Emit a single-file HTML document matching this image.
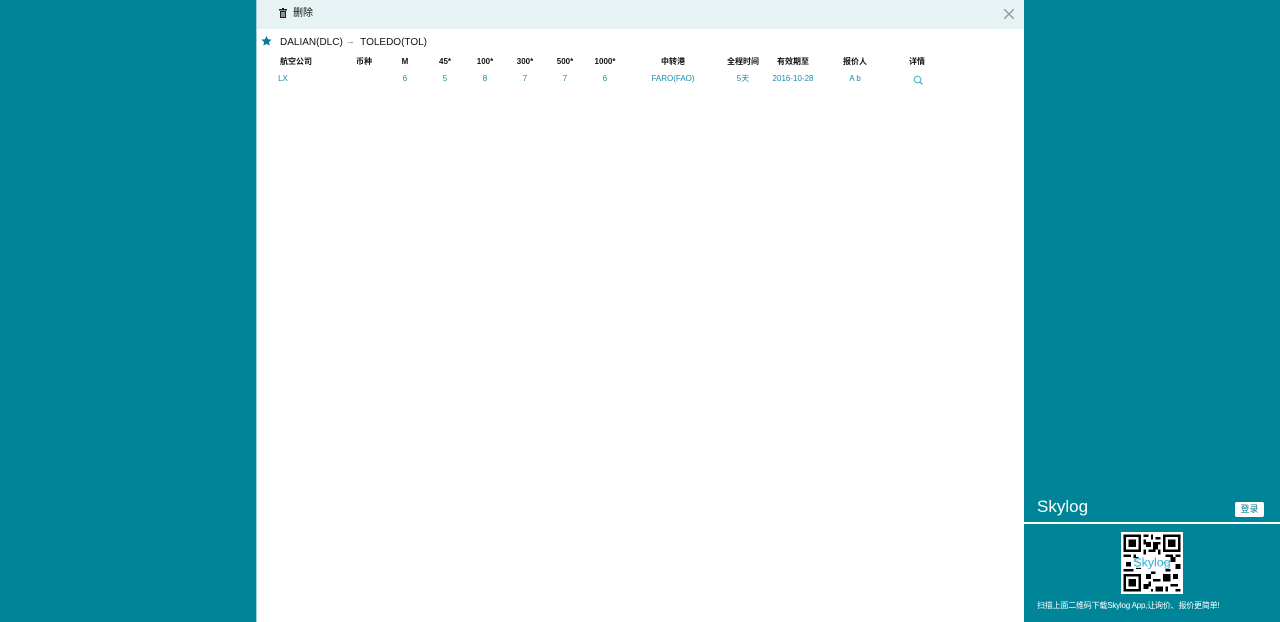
<!DOCTYPE html>
<html><head><meta charset="utf-8"><style>
*{margin:0;padding:0;box-sizing:border-box}
body{width:1280px;height:622px;background:#008598;position:relative;overflow:hidden;font-family:"Liberation Sans","Noto Sans CJK SC",sans-serif}
#panel{position:absolute;left:256px;top:0;width:768px;height:622px;background:#fff;border-left:1px solid #9fd0da}
#bar{position:absolute;left:0;top:0;width:767px;height:29px;background:#e6f2f4}
.t{position:absolute;white-space:nowrap;transform:translateX(-50%);line-height:10px;height:10px}
.h{top:57px;font-size:8px;font-weight:bold;color:#111}
.d{top:74px;font-size:8px;color:#1a8aa8}
</style></head><body>
<div id="panel">
<div id="bar">
<svg style="position:absolute;left:22px;top:8px" width="8" height="10" viewBox="0 0 8 10"><rect x="0" y="1" width="8" height="1.5" fill="#222"/><rect x="3" y="0" width="2" height="1" fill="#222"/><rect x="1" y="3" width="6" height="7" fill="#222"/><rect x="2.5" y="4" width="1" height="5" fill="#fff"/><rect x="4.5" y="4" width="1" height="5" fill="#fff"/></svg>
<div style="position:absolute;left:36px;top:8px;font-size:10px;line-height:12px;color:#111">删除</div>
<svg style="position:absolute;left:747px;top:9px" width="10" height="10" viewBox="0 0 10 10"><path d="M0 0L10 10M10 0L0 10" stroke="#999" stroke-width="1.4"/></svg>
</div>
<svg style="position:absolute;left:4px;top:36px" width="11" height="10" viewBox="0 0 24 23"><path d="M12 0l3.5 7.5 8.2.9-6.1 5.6 1.7 8.1L12 18l-7.3 4.1 1.7-8.1L.3 8.4l8.2-.9z" fill="#0a7a96"/></svg>
<div style="position:absolute;left:23px;top:36px;font-size:10px;line-height:12px;color:#111">DALIAN(DLC) <span style="color:#0a7a96;font-size:9px;position:relative;top:-1px">→</span> &nbsp;TOLEDO(TOL)</div>
<div class="t h" style="left:39px">航空公司</div>
<div class="t h" style="left:107px">币种</div>
<div class="t h" style="left:148px">M</div>
<div class="t h" style="left:188px">45*</div>
<div class="t h" style="left:228px">100*</div>
<div class="t h" style="left:268px">300*</div>
<div class="t h" style="left:308px">500*</div>
<div class="t h" style="left:348px">1000*</div>
<div class="t h" style="left:416px">中转港</div>
<div class="t h" style="left:486px">全程时间</div>
<div class="t h" style="left:536px">有效期至</div>
<div class="t h" style="left:598px">报价人</div>
<div class="t h" style="left:660px">详情</div>
<div class="t d" style="left:26px">LX</div>
<div class="t d" style="left:148px">6</div>
<div class="t d" style="left:188px">5</div>
<div class="t d" style="left:228px">8</div>
<div class="t d" style="left:268px">7</div>
<div class="t d" style="left:308px">7</div>
<div class="t d" style="left:348px">6</div>
<div class="t d" style="left:416px">FARO(FAO)</div>
<div class="t d" style="left:486px">5天</div>
<div class="t d" style="left:536px">2016-10-28</div>
<div class="t d" style="left:598px">A b</div>
<svg style="position:absolute;left:656px;top:75px" width="10" height="10" viewBox="0 0 10 10"><circle cx="4.5" cy="4.5" r="3.3" fill="none" stroke="#5bb8cc" stroke-width="1.2"/><path d="M7 7L9.5 9.5" stroke="#5bb8cc" stroke-width="1.3"/></svg>
</div>
<div style="position:absolute;left:1037px;top:497px;font-size:17px;line-height:20px;color:#fff">Skylog</div>
<div style="position:absolute;left:1235px;top:502px;width:29px;height:15px;background:#fff;border-radius:2px;font-size:9px;color:#0a7a96;text-align:center;line-height:15px">登录</div>
<div style="position:absolute;left:1024px;top:522px;width:256px;height:2px;background:#fff"></div>
<svg style="position:absolute;left:1121px;top:532px" width="62" height="62" viewBox="0 0 25 25" shape-rendering="crispEdges">
<rect width="25" height="25" fill="#fff"/>
<g fill="#000">
<rect x="1" y="1" width="7" height="7"/><rect x="17" y="1" width="7" height="7"/><rect x="1" y="17" width="7" height="7"/>
</g>
<g fill="#fff"><rect x="2" y="2" width="5" height="5"/><rect x="18" y="2" width="5" height="5"/><rect x="2" y="18" width="5" height="5"/></g>
<g fill="#000"><rect x="3" y="3" width="3" height="3"/><rect x="19" y="3" width="3" height="3"/><rect x="3" y="19" width="3" height="3"/>
<rect x="9" y="1" width="2" height="1"/><rect x="12" y="1" width="1" height="2"/><rect x="14" y="2" width="2" height="1"/><rect x="9" y="3" width="1" height="2"/><rect x="10" y="4" width="2" height="2"/><rect x="13" y="4" width="3" height="1"/><rect x="13" y="5" width="2" height="2"/><rect x="9" y="7" width="1" height="2"/><rect x="11" y="7" width="3" height="1"/><rect x="15" y="7" width="1" height="2"/>
<rect x="1" y="9" width="3" height="1"/><rect x="5" y="9" width="1" height="2"/><rect x="5" y="10" width="2" height="2"/><rect x="2" y="12" width="2" height="2"/><rect x="1" y="15" width="4" height="1"/><rect x="6" y="14" width="2" height="1"/>
<rect x="18" y="9" width="3" height="1"/><rect x="20" y="10" width="2" height="2"/><rect x="22" y="13" width="2" height="2"/><rect x="17" y="12" width="2" height="1"/><rect x="22" y="9" width="2" height="1"/>
<rect x="10" y="17" width="2" height="2"/><rect x="12" y="16" width="2" height="1"/><rect x="13" y="19" width="3" height="1"/><rect x="17" y="17" width="3" height="3"/><rect x="9" y="21" width="2" height="2"/><rect x="11" y="20" width="1" height="2"/><rect x="14" y="22" width="3" height="2"/><rect x="20" y="21" width="3" height="1"/><rect x="22" y="23" width="2" height="1"/><rect x="18" y="15" width="2" height="1"/><rect x="21" y="17" width="2" height="2"/><rect x="12" y="23" width="1" height="1"/><rect x="18" y="22" width="1" height="2"/>
</g>
<rect x="5" y="10.5" width="15" height="4" fill="#fff" opacity="0.85"/>
<text x="12.5" y="14" font-size="5" text-anchor="middle" fill="#2bb0d8" font-family="Liberation Sans,sans-serif">Skylog</text>
</svg>
<div style="position:absolute;left:1037px;top:600px;font-size:8px;line-height:11px;color:#fff;white-space:nowrap;letter-spacing:-0.2px">扫描上面二维码下载Skylog App,让询价、报价更简单!</div>
</body></html>
